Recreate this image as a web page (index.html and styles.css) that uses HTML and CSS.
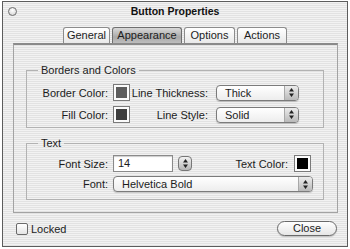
FILE: index.html
```html
<!DOCTYPE html>
<html lang="en">
<head>
    <meta charset="UTF-8">
    <title>Button Properties</title>
    <link rel="stylesheet" href="styles.css">
</head>
<body>

    <div class="window">
        <div class="titlebar">
            <span class="close-dot"></span>
            <span class="title">Button Properties</span>
            <span></span>
        </div>

        <div class="tabs">
            <div class="tab tab-general">General</div>
            <div class="tab tab-appearance selected">Appearance</div>
            <div class="tab tab-options">Options</div>
            <div class="tab tab-actions">Actions</div>
        </div>

        <div class="panel">
            <fieldset class="group group-borders">
                <legend>Borders and Colors</legend>
                <div class="row">
                    <span class="label">Border Color:</span>
                    <span class="swatch"><span class="swatch-fill fill-border"></span></span>
                    <span class="label label-wide">Line Thickness:</span>
                    <div class="popup popup-small">
                        <span class="popup-text">Thick</span>
                        <span class="popup-arrows">
                            <svg width="5" height="9" viewBox="0 0 5 9"><path d="M2.5 0 L5 3.5 L0 3.5 Z M0 5.5 L5 5.5 L2.5 9 Z" fill="#222"/></svg>
                        </span>
                    </div>
                </div>
                <div class="row">
                    <span class="label">Fill Color:</span>
                    <span class="swatch"><span class="swatch-fill fill-fill"></span></span>
                    <span class="label label-wide">Line Style:</span>
                    <div class="popup popup-small">
                        <span class="popup-text">Solid</span>
                        <span class="popup-arrows">
                            <svg width="5" height="9" viewBox="0 0 5 9"><path d="M2.5 0 L5 3.5 L0 3.5 Z M0 5.5 L5 5.5 L2.5 9 Z" fill="#222"/></svg>
                        </span>
                    </div>
                </div>
            </fieldset>

            <fieldset class="group group-text">
                <legend>Text</legend>
                <div class="row">
                    <span class="label">Font Size:</span>
                    <span class="field">14</span>
                    <span class="stepper">
                        <svg width="5" height="9" viewBox="0 0 5 9"><path d="M2.5 0 L5 3.5 L0 3.5 Z M0 5.5 L5 5.5 L2.5 9 Z" fill="#222"/></svg>
                    </span>
                    <span class="spacer"></span>
                    <span class="text-color-label">Text Color:</span>
                    <span class="swatch swatch-text"><span class="swatch-fill fill-text"></span></span>
                </div>
                <div class="row row-font">
                    <span class="label">Font:</span>
                    <div class="popup popup-font">
                        <span class="popup-text">Helvetica Bold</span>
                        <span class="popup-arrows">
                            <svg width="5" height="9" viewBox="0 0 5 9"><path d="M2.5 0 L5 3.5 L0 3.5 Z M0 5.5 L5 5.5 L2.5 9 Z" fill="#222"/></svg>
                        </span>
                    </div>
                </div>
            </fieldset>
        </div>

        <div class="footer">
            <span class="checkbox"></span>
            <span class="check-label">Locked</span>
            <span class="spacer"></span>
            <span class="button">Close</span>
        </div>
    </div>

</body>
</html>
```

FILE: styles.css
```css
/* Global */
body {
    margin: 0;
    font-family: "Liberation Sans", Arial, sans-serif;
    font-size: 11px;
    color: #1c1c1c;
    background: #ffffff;
}

/* Window with aqua pinstripes */
.window {
    box-sizing: border-box;
    width: 346px;
    height: 246px;
    margin: 1px 0 0 2px;
    border: 1px solid #5c5c5c;
    background: repeating-linear-gradient(#f2f2f2 0 1px, #e2e2e2 1px 2px);
    display: flex;
    flex-direction: column;
}

/* Title bar */
.titlebar {
    height: 18px;
    display: grid;
    grid-template-columns: 1fr auto 1fr;
    align-items: center;
}

.close-dot {
    width: 7px;
    height: 7px;
    margin-left: 5px;
    border: 1px solid #6e6e6e;
    border-radius: 50%;
    background: radial-gradient(circle at 50% 35%, #ffffff, #cfcfcf);
}

.title {
    font-size: 10.5px;
    font-weight: bold;
    color: #111;
}

/* Tabs */
.tabs {
    display: flex;
    justify-content: center;
    gap: 2px;
    margin-top: 7px;
    height: 16px;
}

.tab {
    box-sizing: border-box;
    height: 16px;
    line-height: 15px;
    text-align: center;
    border: 1px solid #8c8c8c;
    border-bottom: none;
    border-radius: 3px 3px 0 0;
    background: linear-gradient(#ffffff, #e9e9e9);
}

.tab-general { width: 47px; }
.tab-appearance { width: 70px; }
.tab-options { width: 51px; }
.tab-actions { width: 50px; }

.tab.selected {
    border-color: #6f6f6f;
    background: linear-gradient(#d9d9d9, #a9a9a9 60%, #bdbdbd);
}

/* Tab panel */
.panel {
    box-sizing: border-box;
    height: 170px;
    margin: 0 9px 0 10px;
    border: 1px solid #a3a3a3;
    border-top: 2px solid #8a8a8a;
    display: flex;
    flex-direction: column;
}

/* Groups */
.group {
    min-width: 0;
    margin: 19px 13px 0 12px;
    padding: 7px 0 4px 0;
    border: 1px solid #b2b2b2;
}

.group legend {
    margin-left: 11px;
    padding: 0 3px;
    line-height: 13px;
}

.group-text {
    margin-top: 9px;
    padding: 5px 12px 7px 0;
}

.row {
    display: flex;
    align-items: center;
    height: 17px;
}

.row + .row { margin-top: 5px; }

.group-text .row + .row { margin-top: 4px; }
.row-font { height: 16px; }

.label {
    width: 81px;
    text-align: right;
    flex-shrink: 0;
}

.label-wide {
    width: 78px;
    margin-left: 0;
}

.spacer { flex: 1; }

/* Colour swatches */
.swatch {
    box-sizing: border-box;
    width: 17px;
    height: 17px;
    margin-left: 5px;
    padding: 2px;
    border: 1px solid #7a7a7a;
    background: #fbfbfb;
    flex-shrink: 0;
}

.swatch-fill {
    display: block;
    width: 100%;
    height: 100%;
}

.fill-border { background: #5d5d5d; }
.fill-fill { background: #3e3e3e; }
.fill-text { background: #000000; }

.swatch-text { margin-left: 6px; }

/* Popup menus */
.popup {
    box-sizing: border-box;
    height: 16px;
    display: flex;
    border: 1px solid #7b7b7b;
    border-radius: 4px;
    background: linear-gradient(#ffffff, #ededed);
    box-shadow: 0 1px 1px rgba(0, 0, 0, 0.18);
    flex-shrink: 0;
}

.popup-small {
    width: 83px;
    margin-left: 8px;
}

.popup-font {
    width: 200px;
    margin-left: 5px;
}

.popup-text {
    flex: 1;
    padding-left: 8px;
    line-height: 14px;
}

.popup-arrows {
    width: 13px;
    border-left: 1px solid #a8a8a8;
    border-radius: 0 3px 3px 0;
    background: linear-gradient(#ececec, #b9b9b9);
    display: flex;
    align-items: center;
    justify-content: center;
}

/* Text field + stepper */
.field {
    box-sizing: border-box;
    width: 60px;
    height: 17px;
    margin-left: 5px;
    padding-left: 4px;
    line-height: 15px;
    border: 1px solid #8a8a8a;
    background: #ffffff;
    box-shadow: inset 0 1px 1px rgba(0, 0, 0, 0.2);
}

.stepper {
    box-sizing: border-box;
    width: 14px;
    height: 15px;
    margin-left: 5px;
    border: 1px solid #777;
    border-radius: 4px;
    background: linear-gradient(#f2f2f2, #b6b6b6);
    display: flex;
    align-items: center;
    justify-content: center;
}

.text-color-label { text-align: right; }

/* Footer */
.footer {
    display: flex;
    align-items: center;
    height: 15px;
    margin-top: 8px;
    padding: 0 10px 0 13px;
}

.checkbox {
    box-sizing: border-box;
    width: 12px;
    height: 12px;
    border: 1px solid #6a6a6a;
    border-radius: 2px;
    background: linear-gradient(#ffffff, #e4e4e4);
}

.check-label {
    margin-left: 3px;
}

.button {
    box-sizing: border-box;
    width: 60px;
    height: 15px;
    line-height: 13px;
    text-align: center;
    border: 1px solid #6a6a6a;
    border-radius: 8px;
    background: linear-gradient(#ffffff, #e6e6e6);
    box-shadow: 0 1px 1px rgba(0, 0, 0, 0.2);
}
```
